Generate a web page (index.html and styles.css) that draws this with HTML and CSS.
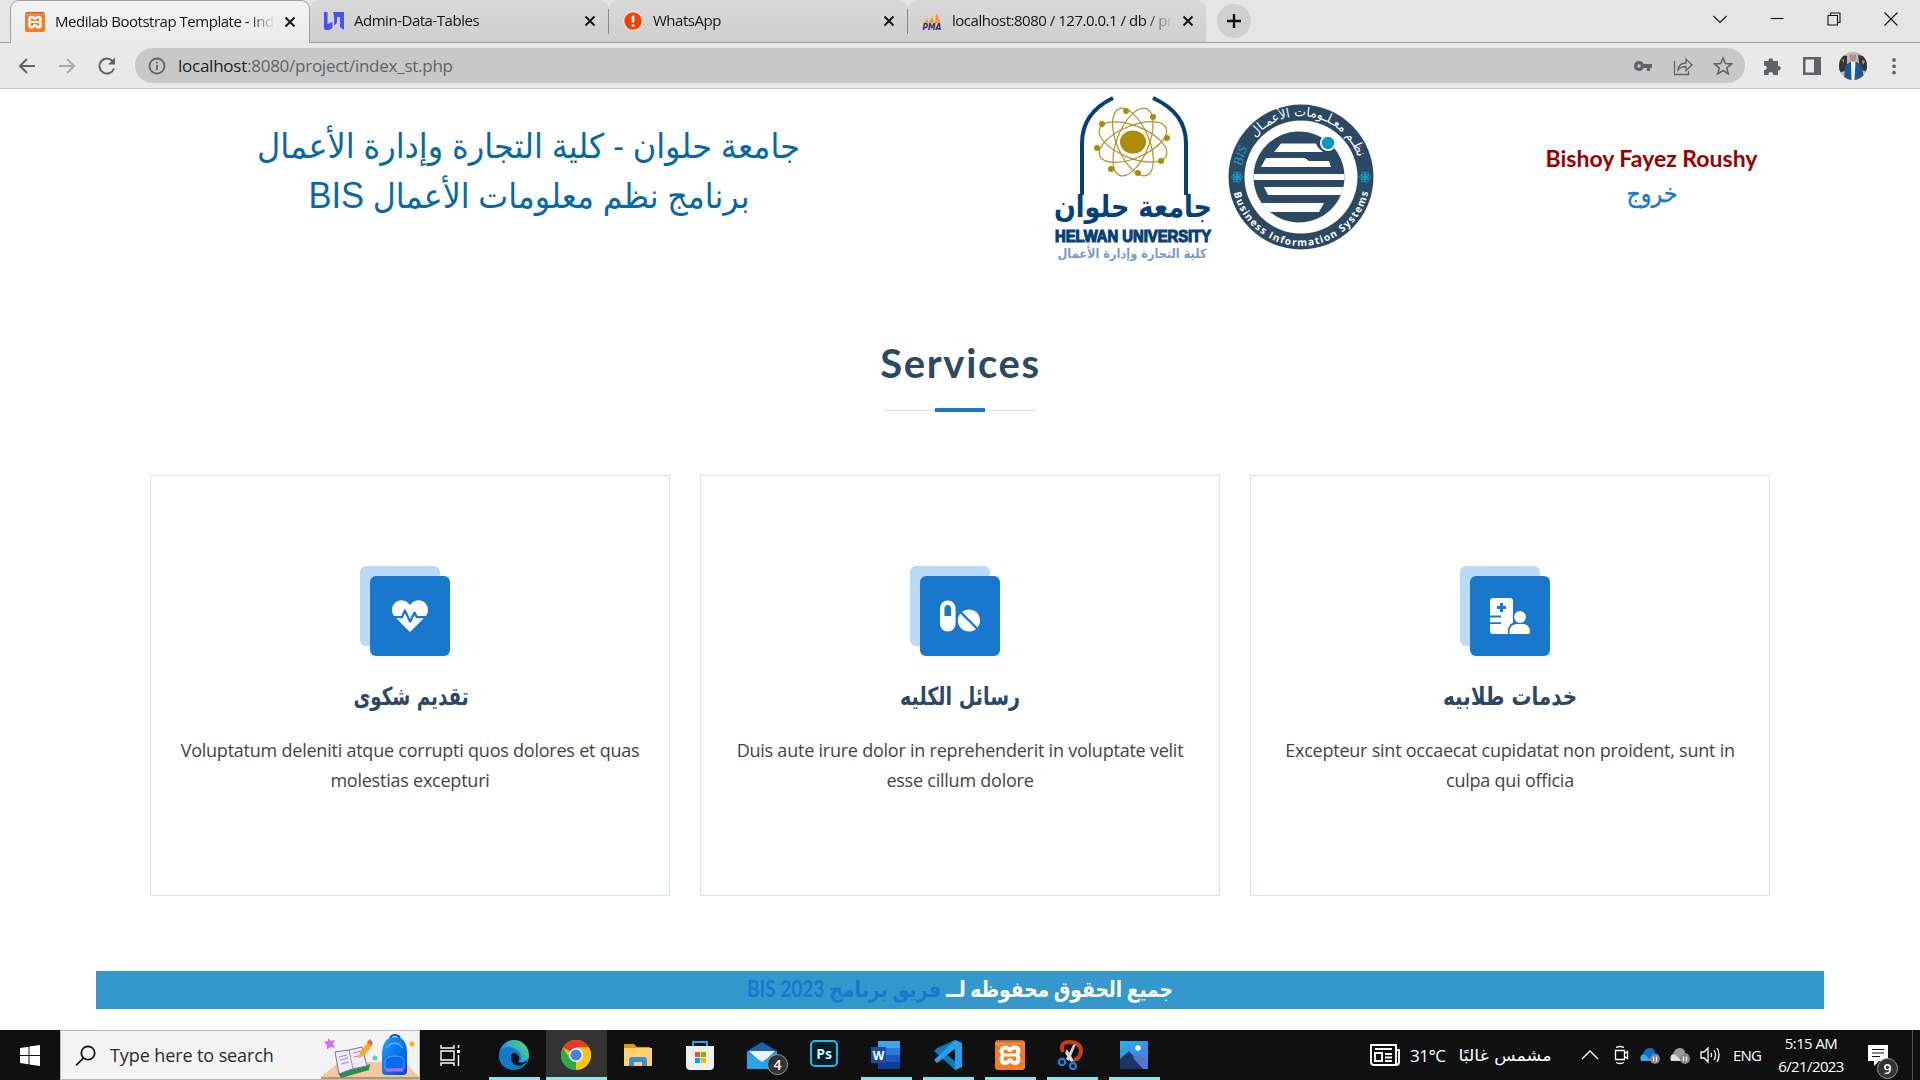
FILE: index.html
```html
<!DOCTYPE html>
<html lang="en">
<head>
<meta charset="utf-8">
<title>Medilab Bootstrap Template - Index</title>
<link rel="stylesheet" href="styles.css">
</head>
<body>
<svg width="0" height="0" class="defs">
  <defs>
    <linearGradient id="orange" x1="0" y1="0" x2="0" y2="1"><stop offset="0" stop-color="#b85a1c"/><stop offset=".12" stop-color="#e8935a"/><stop offset=".18" stop-color="#f47a20"/><stop offset="1" stop-color="#f57e25"/></linearGradient>
    <linearGradient id="edgeg" x1="0" y1="1" x2="1" y2="0"><stop offset="0" stop-color="#0c59a4"/><stop offset=".5" stop-color="#1ba1e0"/><stop offset="1" stop-color="#6be35c"/></linearGradient>
    <linearGradient id="bag" x1="0" y1="0" x2="1" y2="1"><stop offset="0" stop-color="#1aa0ff"/><stop offset="1" stop-color="#0048d8"/></linearGradient>
    <linearGradient id="sky" x1="0" y1="0" x2="1" y2="1"><stop offset="0" stop-color="#1db4f0"/><stop offset="1" stop-color="#5a6fd8"/></linearGradient>
    <symbol id="xampp" viewBox="0 0 30 30">
      <rect width="30" height="30" rx="3" fill="url(#orange)"/>
      <path d="M10 8h3.500q1.500 0 1.500 1.500v2q0 1.500 1.500 1.500H20M20 22h-3.500q-1.500 0-1.500-1.500v-2q0-1.500-1.500-1.500H10" fill="none"/>
      <path d="M10.500 7.500c3 0 3 2.500 4.500 2.500s1.500-2.500 4.500-2.500c2.500 0 4 1.500 4 4 0 2-1.500 2.500-1.500 3.500s1.500 1.500 1.500 4c0 2.500-1.500 4-4 4-3 0-3-3-4.500-3s-1.500 3-4.500 3c-2.500 0-4-1.500-4-4s1.500-3 1.500-4-1.500-1.500-1.500-3.500c0-2.500 1.500-4 4-4z" fill="none" stroke="#fff" stroke-width="4"/>
      <path d="M10 15h10" stroke="#fff" stroke-width="3"/>
    </symbol>
    <symbol id="x" viewBox="0 0 12 12"><path d="M1.500 1.500l9 9M10.500 1.500l-9 9" stroke="#111" stroke-width="1.900"/></symbol>
  </defs>
</svg>

<header class="chrome">
  <div class="tabstrip">
    <div class="tab active"><svg class="fav"><use href="#xampp"/></svg><span class="title">Medilab Bootstrap Template - Index</span><svg class="close"><use href="#x"/></svg></div>
    <div class="tab"><svg class="fav" viewBox="0 0 20 20"><path d="M0 1h3.500v12L8.500 11v6L5 19H1l-1-2zM9 1h11v18l-4-3V6h-3v6l-3 2.500V5z" fill="#4353f5"/></svg><span class="title">Admin-Data-Tables</span><svg class="close"><use href="#x"/></svg></div>
    <div class="tab"><svg class="fav" viewBox="0 0 20 20"><circle cx="10" cy="10" r="9.800" fill="#f4f0ef"/><circle cx="10" cy="10" r="8.700" fill="#ff3d00"/><path d="M10 4.500v7" stroke="#fff" stroke-width="2.600"/><circle cx="10" cy="14.500" r="1.500" fill="#fff"/></svg><span class="title">WhatsApp</span><svg class="close"><use href="#x"/></svg></div>
    <div class="tab last"><svg class="fav" viewBox="0 0 20 20"><path d="M5 3c1 4 0 6-4 9l5-.500zM9 0c2 5 1 8-3 11.500l6 .5zM14 2c3 4 4 7 4 10.500l-5-.500z" fill="#f7962c"/><text x=".5" y="19" textLength="19" lengthAdjust="spacingAndGlyphs" class="pma">PMA</text></svg><span class="title">localhost:8080 / 127.0.0.1 / db / project</span><svg class="close"><use href="#x"/></svg></div>
    <div class="newtab"><svg width="14" height="14" viewBox="0 0 14 14"><path d="M7 0v14M0 7h14" stroke="#111" stroke-width="2.400"/></svg></div>
    <div class="wincontrols">
      <svg viewBox="0 0 14 14"><path d="M.5 4L7 10.500 13.500 4" /></svg>
      <svg viewBox="0 0 14 14"><path d="M.5 6.500h13"/></svg>
      <svg viewBox="0 0 14 14"><path d="M1 3.500h9.500V13H1zM3.500 3.500V1H13v9.500h-2.500"/></svg>
      <svg viewBox="0 0 14 14"><path d="M.5.5l13 13M13.500.5l-13 13"/></svg>
    </div>
  </div>
  <div class="toolbar">
    <div class="nav">
      <svg viewBox="0 0 20 20"><path d="M18 10H3M10 3l-7 7 7 7"/></svg>
      <svg viewBox="0 0 20 20" class="dim"><path d="M2 10h15M10 3l7 7-7 7"/></svg>
      <svg viewBox="0 0 20 20"><path d="M17 12.500A7.500 7.500 0 1 1 15.500 5L17 6.500"/><path d="M18 1.500v7h-7z" fill="#5f6368" stroke="none"/></svg>
    </div>
    <div class="omnibox">
      <svg class="info" viewBox="0 0 18 18"><circle cx="9" cy="9" r="7.500"/><path d="M9 8v5M9 4.800v1.800"/></svg>
      <span class="url">localhost<i>:8080/project/index_st.php</i></span>
      <div class="omni-icons">
        <svg viewBox="0 0 20 20"><path d="M6 5a5 5 0 1 0 4.600 7H14v3h3v-3h2V8h-8.400A5 5 0 0 0 6 5zm0 3.300a1.700 1.700 0 1 1 0 3.400 1.700 1.700 0 0 1 0-3.400z" fill="#5f6368" fill-rule="evenodd"/></svg>
        <svg viewBox="0 0 20 20"><path d="M1.500 5v13.500h14V15M5 14c.5-5 3.500-7 8-7V3l6 6-6 5.500v-4c-4 0-6 .8-8 3.500z" fill="none" stroke="#5f6368" stroke-width="1.300"/></svg>
        <svg viewBox="0 0 20 20"><path d="M10 2l2.400 5.500 6 .5-4.600 3.900 1.400 5.900L10 14.600l-5.200 3.200 1.400-5.900L1.600 8l6-.5z" fill="none" stroke="#5f6368" stroke-width="1.600"/></svg>
      </div>
    </div>
    <div class="ext">
      <svg viewBox="0 0 20 20"><path d="M2 5h4.500a2.300 2.300 0 1 1 4.500 0H16v5a2.300 2.300 0 1 1 0 4.500V19h-5a2.300 2.300 0 1 0-4.400 0H2v-5a2.300 2.300 0 1 0 0-4.500z" fill="#5f6368"/></svg>
      <svg viewBox="0 0 20 20"><path d="M1 1h18v18H1zM3.500 3.500v13H12v-13z" fill="#5f6368" fill-rule="evenodd"/></svg>
      <svg class="avatar" viewBox="0 0 28 28"><clipPath id="av"><circle cx="14" cy="14" r="14"/></clipPath><g clip-path="url(#av)"><rect width="28" height="28" fill="#b9bab8"/><path d="M0 3l8 1v14l-8 3zM19 3l9 2v15l-7-3z" fill="#343437"/><path d="M3 8l2-1v4zM23 8l3 1-2 4z" fill="#c9a33c"/><path d="M6 14l5-4h7l5 4 2 14H5z" fill="#1d5795"/><path d="M12 10h4.500l-1 18h-3z" fill="#eef3f7"/><circle cx="14" cy="6" r="3.200" fill="#c08c76"/><path d="M10.500 5q3.500-6 7 0l-1-2-2.500-1-2.500 1z" fill="#46342c"/></g></svg>
      <svg viewBox="0 0 20 20"><g fill="#5f6368"><circle cx="10" cy="4" r="1.900"/><circle cx="10" cy="10.300" r="1.900"/><circle cx="10" cy="16.600" r="1.900"/></g></svg>
    </div>
  </div>
</header>

<main class="page">
  <section class="top">
    <svg class="heading" viewBox="0 0 580 120">
      <g direction="rtl" text-anchor="middle" class="headtext">
        <text x="288.500" y="48" textLength="543" lengthAdjust="spacingAndGlyphs">جامعة حلوان - كلية التجارة وإدارة الأعمال</text>
        <text x="289" y="98" textLength="441" lengthAdjust="spacingAndGlyphs">برنامج نظم معلومات الأعمال <tspan class="latin">BIS</tspan></text>
      </g>
    </svg>
    <svg class="logos" viewBox="0 0 350 179">
      <g fill="none" stroke="#064078" stroke-width="4"><path d="M73 9Q42 24 42 54V106M113 9Q146 24 146 54V106"/></g>
      <g fill="none" stroke="#b1912c" stroke-width="1.200"><ellipse cx="93" cy="53" rx="36" ry="16" transform="rotate(22 93 53)"/><ellipse cx="93" cy="53" rx="36" ry="16" transform="rotate(67 93 53)"/><ellipse cx="93" cy="53" rx="36" ry="16" transform="rotate(112 93 53)"/><ellipse cx="93" cy="53" rx="36" ry="16" transform="rotate(157 93 53)"/></g>
      <g fill="#ae8a0b"><ellipse cx="93" cy="53" rx="13" ry="11.500"/><circle cx="86" cy="22" r="3"/><circle cx="113" cy="28" r="3"/><circle cx="127" cy="49" r="3"/><circle cx="121" cy="72" r="3"/><circle cx="98" cy="84" r="3"/><circle cx="71" cy="80" r="3"/><circle cx="57" cy="59" r="3"/><circle cx="62" cy="35" r="3"/></g>
      <g text-anchor="middle" fill="#064078">
        <text class="kufic" x="93" y="128" direction="rtl" textLength="158" lengthAdjust="spacingAndGlyphs">جامعة حلوان</text>
        <text class="helwan" x="93" y="152.500" textLength="156" lengthAdjust="spacingAndGlyphs">HELWAN UNIVERSITY</text>
        <text class="faculty" x="92" y="169" direction="rtl" textLength="149" lengthAdjust="spacingAndGlyphs">كلية التجارة وإدارة الأعمال</text>
      </g>
      <g transform="translate(0 -1)">
      <circle cx="261" cy="89" r="72.500" fill="#2c4964"/><circle cx="261" cy="89" r="56.500" fill="#fff"/>
      <clipPath id="globe"><circle cx="259" cy="89" r="45.500"/></clipPath>
      <g clip-path="url(#globe)"><path d="M210 40h100v100H210z" fill="#2c4964"/><path d="M241 55.500h35l2 4 5 4.500h-49zM226 70h39l4 3h20l2 6h-70zM210 86h100v6H210zM224 99h86v8h-82zM210 115h74l-5 9h-69z" fill="#fff"/></g>
      <circle cx="288" cy="55" r="8" fill="#fff"/><circle cx="288" cy="55" r="6.200" fill="#0998bd"/>
      <path id="ringTop" d="M214 51A60 60 0 0 1 320 77" fill="none"/>
      <path id="ringBottom" d="M192 89A69 69 0 0 0 330 89" fill="none"/>
      <path id="ringBis" d="M202 79A61 61 0 0 1 212 52" fill="none"/>
      <text class="ring ar"><textPath href="#ringTop" startOffset="2" textLength="127" lengthAdjust="spacingAndGlyphs">نظـم معـلـومات الأعمـال</textPath></text>
      <text class="ring en"><textPath href="#ringBottom" startOffset="16" textLength="185">Business Information Systems</textPath></text>
      <text class="ring bis"><textPath href="#ringBis" startOffset="1">BIS</textPath></text>
      <g fill="none" stroke="#13a5c8" stroke-width=".8"><g id="atom"><ellipse cx="197" cy="89" rx="5.500" ry="2.500"/><ellipse cx="197" cy="89" rx="5.500" ry="2.500" transform="rotate(60 197 89)"/><ellipse cx="197" cy="89" rx="5.500" ry="2.500" transform="rotate(120 197 89)"/><circle cx="197" cy="89" r="1.500" fill="#13a5c8"/></g><use href="#atom" x="128"/></g>
      </g>
    </svg>
    <div class="user"><strong>Bishoy Fayez Roushy</strong><svg viewBox="0 0 60 38"><text x="30" y="25" text-anchor="middle" direction="rtl" textLength="51" lengthAdjust="spacingAndGlyphs" class="exit">خروج</text></svg></div>
  </section>

  <section class="services">
    <h2>Services</h2>
    <div class="rule"><b></b></div>
    <div class="cards">
      <article class="card">
        <div class="icon"><svg viewBox="0 0 512 512"><path d="M320.200 243.800l-49.700 99.400c-6 12.100-23.400 11.700-28.900-.6l-56.900-126.300-30 71.700H60.600l182.500 186.500c7.100 7.300 18.600 7.300 25.700 0L451.400 288H342.300l-22.100-44.200zM473.700 73.900l-2.400-2.500c-51.500-52.600-135.800-52.600-187.400 0L256 100l-27.900-28.500c-51.500-52.700-135.900-52.700-187.400 0l-2.400 2.400C-10.400 123.700-12.500 203 31 256h102.400l35.900-86.200c5.400-12.900 23.600-13.200 29.400-.4l58.200 129.300 49-97.900c5.900-11.800 22.700-11.800 28.600 0l27.600 55.200H481c43.500-53 41.400-132.300-7.300-182.100z"/></svg></div>
        <h4><svg viewBox="0 0 160 40"><text x="81" y="29" text-anchor="middle" direction="rtl" textLength="115" lengthAdjust="spacingAndGlyphs">تقديم شكوى</text></svg></h4>
        <p>Voluptatum deleniti atque corrupti quos dolores et quas molestias excepturi</p>
      </article>
      <article class="card">
        <div class="icon"><svg class="wide" viewBox="0 0 576 512"><path d="M112 32C50.100 32 0 82.100 0 144v224c0 61.900 50.100 112 112 112s112-50.100 112-112V144c0-61.900-50.100-112-112-112zm48 224H64V144c0-26.500 21.500-48 48-48s48 21.500 48 48v112zm139.700-29.700c-3.500-3.500-9.400-3.100-12.300.8-45.300 62.500-40.400 150.100 15.900 206.400 56.300 56.300 143.900 61.200 206.400 15.900 4-2.900 4.300-8.800.8-12.300L299.700 226.300zm229.800-19c-56.300-56.300-143.900-61.200-206.400-15.900-4 2.900-4.300 8.800-.8 12.300l210.800 210.800c3.500 3.500 9.400 3.100 12.300-.8 45.300-62.600 40.500-150.100-15.900-206.400z"/></svg></div>
        <h4><svg viewBox="0 0 160 40"><text x="80" y="29" text-anchor="middle" direction="rtl" textLength="120" lengthAdjust="spacingAndGlyphs">رسائل الكليه</text></svg></h4>
        <p>Duis aute irure dolor in reprehenderit in voluptate velit esse cillum dolore</p>
      </article>
      <article class="card">
        <div class="icon"><svg class="wide" viewBox="0 0 40 36"><path d="M3 0h17q3 0 3 3v33H3q-3 0-3-3v-7h11v-1.700H0V19.500h11v-2H0V3q0-3 3-3zm7 5v3H7v3h3v3h3v-3h3V8h-3V5z" fill-rule="evenodd"/><path d="M18 38v-6q1-8 9-8h6v14z" fill="#1977cc"/><circle cx="30" cy="19" r="7.300" fill="#1977cc"/><circle cx="30" cy="19" r="5.900"/><path d="M19.500 36v-3q1-7 7.500-7h6q6 0 7 7v1q0 2-2 2z"/></svg></div>
        <h4><svg viewBox="0 0 160 40"><text x="80" y="29" text-anchor="middle" direction="rtl" textLength="134" lengthAdjust="spacingAndGlyphs">خدمات طلابيه</text></svg></h4>
        <p>Excepteur sint occaecat cupidatat non proident, sunt in culpa qui officia</p>
      </article>
    </div>
  </section>

  <footer class="copyright"><svg viewBox="0 0 460 38"><g direction="rtl" class="foot"><text x="443" y="26" textLength="227" lengthAdjust="spacingAndGlyphs" fill="#fff">جميع الحقوق محفوظه لــ</text><text x="211" y="26" textLength="194" lengthAdjust="spacingAndGlyphs" fill="#1977cc">فريق برنامج BIS 2023</text></g></svg></footer>
</main>

<nav class="taskbar">
  <div class="start"><svg width="20" height="21" viewBox="0 0 20 21"><path d="M0 3l8.500-1.300V10H0zM9.500 1.500L20 0v10H9.500zM0 11h8.500v8.300L0 18zM9.500 11H20v10L9.500 19.500z" fill="#fff"/></svg></div>
  <div class="search">
    <svg class="mag" width="21" height="21" viewBox="0 0 21 21"><circle cx="13" cy="8" r="6.700"/><path d="M8.500 13L1 20.300"/></svg>
    <span>Type here to search</span>
    <svg class="art" width="98" height="48" viewBox="0 0 98 48"><path d="M0 46l18-15h66l14 15z" fill="#f0c9a0"/><path d="M0 46h98v2H0z" fill="#bd9468"/><path d="M17 42l24-6 8-3-1 6-28 8z" fill="#278f4b"/><path d="M14 21l14-2 13-3 5 19-15 3-13 5z" fill="#eeeaf8" stroke="#7b6ba5"/><path d="M28 19l4 19M18 26l8-2M19 29l8-2M20 33l8-2M32 22l8-2M33 26l8-2" stroke="#9b91b8" fill="none"/><path d="M37 27l2-6 8-10 4 4-8 10z" fill="#ffa82b"/><path d="M46 11l3-3 3 4-2 3z" fill="#f15b52"/><path d="M7 7l3 3 4-1-2 4 2 4-4-1-4 2v-4l-3-3 4-1z" fill="#d66cf3"/><path d="M69 9q0-5 5-5t5 5" stroke="#0b4fb8" stroke-width="2" fill="none"/><path d="M61 22Q62 6 74 6t12 16v18q0 4-4 4H65q-4 0-4-4z" fill="url(#bag)"/><path d="M64 31q0-6 10-6t9 6v7H64z" fill="#0a68f4" stroke="#48aaff"/><path d="M65 39h17" stroke="#b469ff" stroke-width="3"/><path d="M65 17q9-10 17 0" fill="none" stroke="#90d5ff"/><circle cx="54" cy="27" r="2.500" fill="#58ccdc"/><circle cx="91" cy="13" r="2.500" fill="#ffae00"/></svg>
  </div>
  <div class="apps">
    <div class="app view"><svg viewBox="0 0 24 24"><path d="M3 2v3h13V2M3 8h13v9H3zM3 23v-3h13v3M20.500 2v3M20.500 12v11" fill="none" stroke="#fff" stroke-width="1.400"/><path d="M19 7h3v3h-3z" fill="#fff"/></svg></div>
    <div class="app run"><svg viewBox="0 0 30 30"><circle cx="15" cy="15" r="15" fill="url(#edgeg)"/><path d="M1 11Q7 5 14 8q8 3 8 10 0 3-3 4 7 2 10-3-4 11-14 11Q0 29 0 15z" fill="#1479ca"/><path d="M12 17q1-6 6-3 4 3 1 8 6 2 10-3-3 6-9 7-8-1-8-9z" fill="#101318"/></svg></div>
    <div class="app run on"><svg viewBox="0 0 30 30"><circle cx="15" cy="15" r="15" fill="#fbc116"/><path d="M15 15L2 7.500A15 15 0 0 1 28 7.500H15z" fill="#e33b2e"/><path d="M15 15v15A15 15 0 0 1 2 7.500L9 19z" fill="#2da94f"/><path d="M15 15l6 4-6 11a15 15 0 0 0 13-22.500H15z" fill="#fbc116"/><circle cx="15" cy="15" r="7" fill="#fff"/><circle cx="15" cy="15" r="5.600" fill="#3f82f0"/></svg></div>
    <div class="app"><svg viewBox="0 0 30 30"><path d="M1 4h10l3 3h13v5H1z" fill="#d99b13"/><path d="M1 8h28v18H1z" fill="#fed266"/><path d="M6 26v-6q0-3 3-3h12q3 0 3 3v6h-5v-4h-8v4z" fill="#3b8dd4"/></svg></div>
    <div class="app"><svg viewBox="0 0 30 30"><path d="M8 6V2h14v4" stroke="#1eaaf1" stroke-width="2" fill="none"/><path d="M1 6h28v20q0 4-4 4H5q-4 0-4-4z" fill="#eee"/><path d="M10 12h5v5h-5z" fill="#f25022"/><path d="M16 12h5v5h-5z" fill="#7fba00"/><path d="M10 18h5v5h-5z" fill="#00a4ef"/><path d="M16 18h5v5h-5z" fill="#ffb900"/></svg></div>
    <div class="app"><svg viewBox="0 0 30 30"><path d="M0 11L15 2l15 9v18H0z" fill="#1465ae"/><path d="M2 11h26L15 24z" fill="#eee"/><path d="M0 11l15 11 15-11v18H0z" fill="#25a5e8"/><path d="M2 11h26L15 21z" fill="#f2f2f2"/></svg><em class="badge">4</em></div>
    <div class="app"><svg viewBox="0 0 30 30"><rect x="2" y="1" width="26" height="25" rx="4" fill="#001d2a" stroke="#20bdec" stroke-width="2"/><text x="15" y="19" text-anchor="middle" class="ps">Ps</text></svg></div>
    <div class="app run"><svg viewBox="0 0 30 30"><path d="M7 1h22v7H7z" fill="#41a5ee"/><path d="M7 8h22v7H7z" fill="#2b7cd3"/><path d="M7 15h22v7H7z" fill="#185abd"/><path d="M7 22h22v7H7z" fill="#103f91"/><path d="M0 7h15v16H0z" fill="#164fa8"/><text x="7.500" y="19.500" text-anchor="middle" class="word">W</text></svg></div>
    <div class="app run"><svg viewBox="0 0 30 30"><path d="M22 0l7 3v24l-7 3L1 11l3-3z" fill="#0c78bf"/><path d="M22 0l7 3v24l-7 3V9L4 23l-3-3z" fill="#269ee8"/><path d="M22 9v12l-8-6z" fill="#101010"/><path d="M0 12l4 3-4 3z" fill="#101010"/></svg></div>
    <div class="app run"><svg><use href="#xampp"/></svg></div>
    <div class="app run"><svg viewBox="0 0 30 30"><path d="M6 12Q2 2 13 2q11 1 11 9-1 8-7 9" fill="none" stroke="#cb3d12" stroke-width="4"/><path d="M19 4l-7 17-3-2 7-14zM10 9l7 12-3 1-6-9z" fill="#d4d5d7"/><circle cx="5" cy="22" r="3.200" fill="none" stroke="#267dd1" stroke-width="2.300"/><circle cx="16" cy="26" r="3" fill="none" stroke="#267dd1" stroke-width="2.300"/></svg></div>
    <div class="app run"><svg viewBox="0 0 30 30"><path d="M1 1h28v28H1z" fill="url(#sky)"/><path d="M1 19l9-8 16 18H1z" fill="#183563"/><path d="M14 18l6-5 9 9v7h-5z" fill="#4c78ce"/><circle cx="19" cy="8" r="2.700" fill="#fff"/></svg></div>
  </div>
  <div class="tray">
    <svg class="news" viewBox="0 0 30 22"><path d="M2 1h24v20H4q-3 0-3-3V1zM26 6h3v12q0 3-3 3M5 5h17M5 9h7v8H5zM15 10h7M15 13.500h7M15 17h7" fill="none" stroke="#fff" stroke-width="1.900"/></svg>
    <span class="temp">31°C</span>
    <svg class="weather" viewBox="0 0 94 30"><text x="47" y="21" text-anchor="middle" direction="rtl" textLength="93" lengthAdjust="spacingAndGlyphs">مشمس غالبًا</text></svg>
    <svg class="t up" viewBox="0 0 20 20"><path d="M2 14l8-8 8 8"/></svg>
    <svg class="t cam" viewBox="0 0 20 20"><path d="M3.500 5.500h9v9h-9zM12.500 8.500l3-2v7l-3-2M4 2.500q4-2 8 0M4 17.500q4 2 8 0"/></svg>
    <svg class="t cloud" viewBox="0 0 20 20"><path d="M3 16q-4-4 0-7Q5 2 11 3q4 1 4 5 5 1 4 5l-4 3z" fill="#0e71c4"/><path d="M1 16q-2-6 3-7l8 7z" fill="#39a9ee"/><circle cx="15" cy="14" r="5" fill="#888"/><path d="M13.500 11.500v5M16.500 11.500v5" stroke="#eee"/></svg>
    <svg class="t cloud" viewBox="0 0 20 20"><path d="M3 16q-4-4 0-7Q5 2 11 3q4 1 4 5 5 1 4 5l-4 3z" fill="#999"/><path d="M1 16q-2-6 3-7l8 7z" fill="#ddd"/><circle cx="15" cy="14" r="5" fill="#888"/><path d="M13.500 11.500v5M16.500 11.500v5" stroke="#eee"/></svg>
    <svg class="t" viewBox="0 0 20 20"><path d="M1 7h3l4-4v14l-4-4H1zM11 8q1 2 0 4M14 5q3 5 0 10M17 3q4 7 0 14"/></svg>
    <span class="lang">ENG</span>
    <div class="clock"><span>5:15 AM</span><span>6/21/2023</span></div>
    <div class="notify"><svg width="22" height="22" viewBox="0 0 22 22"><path d="M0 1h20v16H11l-5 5v-5H0z" fill="#fff"/><path d="M4 5.500h12M4 9h12M4 12.500h8" stroke="#101010"/></svg><em class="badge">9</em></div>
  </div>
</nav>
</body>
</html>
```
FILE: styles.css
```css
* { box-sizing: border-box; }
body { margin: 0; width: 1920px; height: 1080px; overflow: hidden; display: flex; flex-direction: column; background: #fff; font-family: "Open Sans", "DejaVu Sans", sans-serif; }
svg { display: block; flex: none; }
.defs { position: absolute; }

/* browser frame */
.chrome { height: 89px; flex: none; background: #e9e9e9; border-bottom: 1px solid #c4c4c4; }
.tabstrip { height: 43px; display: flex; padding-left: 10px; background: #e5e5e5; border-bottom: 1px solid #a0a0a0; }
.tab { width: 299px; height: 42px; display: flex; align-items: center; padding: 0 13px 0 14px; background: linear-gradient(#d9d9d9, #cecece); border-radius: 9px 9px 0 0; position: relative; }
.tab:not(.active):not(.last)::after { content: ""; position: absolute; right: 0; top: 9px; width: 1px; height: 25px; background: #888; }
.tab.active { width: 300px; height: 43px; background: linear-gradient(#f2f2f2, #eaeaea); border: 1px solid #a0a0a0; border-bottom: 0; }
.tab.last { width: 298px; padding-right: 12px; }
.fav { width: 20px; height: 20px; margin-right: 10px; }
.title { flex: 1; font: 15px/26px "Open Sans", sans-serif; letter-spacing: -.48px; white-space: nowrap; overflow: hidden; color: #151515; margin-right: 9px; padding-bottom: 2px; mask-image: linear-gradient(90deg, #000 88%, transparent); }
.close { width: 12px; height: 12px; }
.pma { font: italic bold 8px "DejaVu Sans", sans-serif; fill: #34345c; }
.newtab { width: 34px; height: 34px; margin: 4px 0 0 11px; border-radius: 50%; background: #d0d0d0; display: flex; align-items: center; justify-content: center; }
.wincontrols { margin-left: auto; display: flex; gap: 43px; padding: 12px 22px 0 0; }
.wincontrols svg { width: 14px; height: 14px; fill: none; stroke: #111; stroke-width: 1.100; }
.toolbar { height: 45px; display: flex; align-items: center; padding: 0 18px 0 17px; }
.nav { display: flex; gap: 20px; width: 118px; flex: none; }
.nav svg { width: 20px; height: 20px; fill: none; stroke: #5f6368; stroke-width: 2; }
.nav .dim { stroke: #aaa; }
.omnibox { width: 1610px; flex: none; height: 35px; border-radius: 18px; background: #c8c8c8; display: flex; align-items: center; padding: 0 12px 0 13px; }
.info { width: 18px; height: 18px; fill: none; stroke: #5f6368; stroke-width: 1.800; }
.url { font-size: 17px; letter-spacing: -.25px; color: #222; margin-left: 12px; }
.url i { font-style: normal; color: #5f6368; }
.omni-icons { margin-left: auto; display: flex; gap: 20px; }
.omni-icons svg, .ext svg { width: 20px; height: 20px; }
.ext { display: flex; align-items: center; gap: 20px; margin-left: 17px; }
.ext .avatar { width: 28px; height: 28px; margin: 0 -3px 0 -3px; }

/* page */
.page { height: 941px; flex: none; }
.top { height: 179px; display: flex; }
.heading { width: 580px; height: 120px; margin: 21px 0 0 240px; }
.headtext { font: 34px "Liberation Sans", "DejaVu Sans", sans-serif; fill: #06699f; }
.latin { font-size: 37px; }
.logos { width: 350px; height: 179px; margin-left: 220px; }
.kufic { font: bold 30px "DejaVu Sans", sans-serif; }
.helwan { font: bold 16px "Liberation Sans", sans-serif; stroke: #064078; stroke-width: 1.200; }
.faculty { font: bold 13px "DejaVu Sans", sans-serif; fill: #7b9bc7; }
.ring { fill: #fff; }
.ring.ar { font: 13px "DejaVu Sans", sans-serif; }
.ring.en { font: bold 10px "Open Sans", sans-serif; }
.ring.bis { font: italic 13px "Liberation Serif", serif; fill: #18a0c4; }
.user { width: 261px; padding-top: 54px; margin-left: 131px; display: flex; flex-direction: column; align-items: center; }
.user strong { font: bold 23px/30px Lato, sans-serif; color: #900; white-space: nowrap; }
.user svg { width: 60px; height: 38px; margin-top: 4px; }
.exit { font: 25px "DejaVu Sans", sans-serif; fill: #1977cc; stroke: #1977cc; stroke-width: .4; }

.services { display: flex; flex-direction: column; align-items: center; height: 703px; padding-top: 70px; }
.services h2 { margin: 0; font: bold 40px/50px Lato, sans-serif; letter-spacing: 1.650px; padding-left: 1px; color: #2c4964; }
.rule { width: 150px; height: 4px; margin-top: 20px; display: flex; justify-content: center; align-items: flex-end; background: linear-gradient(#fff 2px, #ddd 2px, #ddd 3px, #fff 3px); }
.rule b { width: 50px; height: 4px; background: #1977cc; }
.cards { display: grid; grid-template-columns: repeat(3, 520px); gap: 30px; margin-top: 63px; }
.card { height: 421px; border: 1px solid #d5e1ed; padding: 100px 20px 0; display: flex; flex-direction: column; align-items: center; }
.icon { width: 80px; height: 80px; border-radius: 6px; background: #1977cc; box-shadow: -10px -10px 0 #badaf7; display: flex; align-items: center; justify-content: center; }
.icon svg { width: 36px; height: 36px; fill: #fff; }
.icon .wide { width: 40px; }
.card h4 { margin: 20px 0 0; height: 40px; font: bold 25px "DejaVu Sans", sans-serif; fill: #2c4964; }
.card h4 svg { width: 160px; height: 40px; }
.card p { margin: 19px 0 0; width: 476px; text-align: center; font-size: 18px; letter-spacing: -.23px; line-height: 30px; color: #444; }
.copyright { width: 1728px; height: 38px; margin: 0 auto; background: #3498cc; display: flex; justify-content: center; }
.copyright svg { width: 460px; height: 38px; }
.foot { font: bold 22px Lato, "DejaVu Sans", sans-serif; }

/* taskbar */
.taskbar { height: 50px; flex: none; display: flex; background: #101010; color: #fff; }
.start { width: 60px; display: flex; align-items: center; justify-content: center; }
.search { width: 360px; background: #f3f3f3; border: 1px solid #bbb; display: flex; align-items: center; color: #2b2b2b; }
.mag { margin-left: 14px; fill: none; stroke: #111; stroke-width: 1.700; }
.search span { font-size: 18px; letter-spacing: -.1px; margin-left: 14px; white-space: nowrap; }
.art { margin-left: auto; }
.apps { display: flex; margin-left: 1px; }
.app { width: 62px; height: 50px; display: flex; align-items: center; justify-content: center; position: relative; }
.app svg { width: 30px; height: 30px; }
.app.view svg { width: 24px; height: 24px; margin-right: 4px; }
.app.run { background: linear-gradient(#8be5ea, #8be5ea) center bottom / 51px 3px no-repeat; }
.app.on { background: linear-gradient(#8be5ea, #8be5ea) center bottom / 61px 3px no-repeat, linear-gradient(#333, #333) center / 61px 100% no-repeat; }
.badge { position: absolute; left: 36px; top: 24px; width: 21px; height: 21px; border: 1px solid #999; border-radius: 50%; background: #333; font: 600 14px/19px "Open Sans", sans-serif; text-align: center; }
.ps { font: bold 14px "Open Sans", sans-serif; fill: #d5f2fc; }
.word { font: bold 12px "Open Sans", sans-serif; fill: #fff; }
.tray { flex: 1; display: flex; align-items: center; padding-left: 205px; }
.news { width: 30px; height: 22px; margin-right: 10px; }
.temp { width: 48px; font-size: 17px; letter-spacing: -.5px; }
.weather { width: 94px; height: 30px; font: 16px "DejaVu Sans", sans-serif; fill: #fff; margin-right: 28px; }
.t { width: 20px; height: 20px; margin-right: 10px; fill: none; stroke: #fff; stroke-width: 1.300; }
.t.up { margin-right: 12px; }
.t.cam { margin-right: 8px; }
.t.cloud { stroke: none; }
.lang { width: 32px; font-size: 15px; letter-spacing: -.8px; margin-left: 3px; }
.clock { width: 92px; display: flex; flex-direction: column; align-items: center; font-size: 15px; line-height: 23px; letter-spacing: -.6px; }
.notify { width: 56px; height: 50px; padding: 14px 0 0 11px; position: relative; border-right: 1px solid #555; }
.notify .badge { left: 20px; top: 28px; }
```
